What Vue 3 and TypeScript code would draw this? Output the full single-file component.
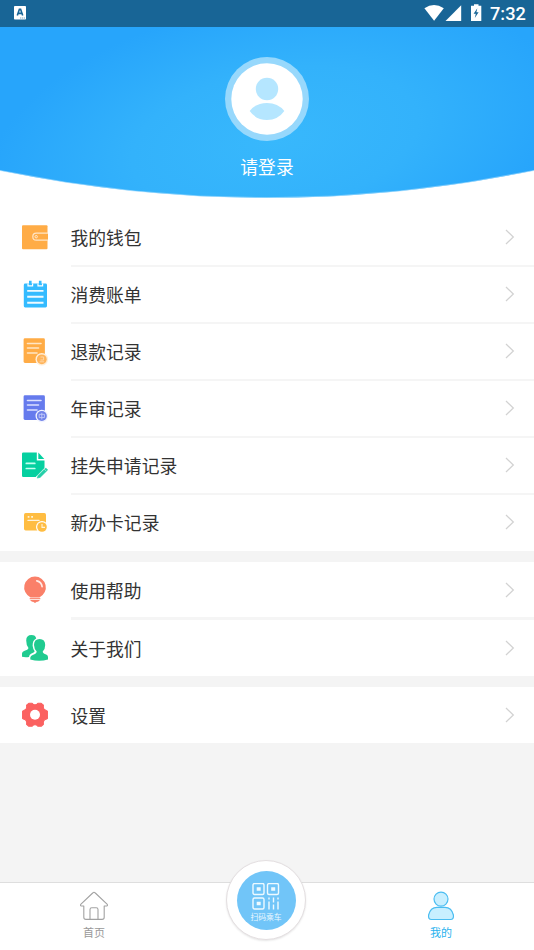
<script setup lang="ts">
interface MenuItem {
  icon: string
  label: string
}

const groups: MenuItem[][] = [
  [
    { icon: 'wallet', label: '我的钱包' },
    { icon: 'bill', label: '消费账单' },
    { icon: 'refund', label: '退款记录' },
    { icon: 'audit', label: '年审记录' },
    { icon: 'loss', label: '挂失申请记录' },
    { icon: 'card', label: '新办卡记录' },
  ],
  [
    { icon: 'help', label: '使用帮助' },
    { icon: 'about', label: '关于我们' },
  ],
  [{ icon: 'settings', label: '设置' }],
]
</script>

<template>
  <div class="screen">
    <header class="hero">
      <svg class="hero-bg" viewBox="0 0 534 198" width="534" height="198">
        <defs>
          <radialGradient id="sky" gradientUnits="userSpaceOnUse" cx="0" cy="0" r="1" gradientTransform="translate(275 140) rotate(-10) scale(290 140)">
            <stop offset="0" stop-color="#38b8fc" />
            <stop offset="0.5" stop-color="#33b2fb" />
            <stop offset="1" stop-color="#27a5fb" />
          </radialGradient>
        </defs>
        <path d="M0 0H534V170.5Q267 225 0 170.5Z" fill="url(#sky)" />
        <path d="M0 170.5Q267 225 534 170.5" fill="none" stroke="#a5dcfd" stroke-width="0.6" />
      </svg>
      <div class="status">
        <svg width="12" height="14" viewBox="0 0 12 14">
          <rect width="12" height="13.5" rx="0.8" fill="#fff" />
          <path d="M3.3 9.5L5.4 3.3H6.6L8.7 9.5M4.2 7.4H7.8" fill="none" stroke="#186596" stroke-width="1.6" />
          <path d="M6 12H11" stroke="#7ea8c2" stroke-width="1" stroke-dasharray="1.3 0.6" />
        </svg>
        <div class="status-right">
          <svg width="58" height="18" viewBox="0 0 58 18" fill="#fff">
            <path d="M0.4 4.2Q10 -2.3 19.8 4.2L10.1 16.8Z" />
            <path d="M37.2 1.2V17H21.5Z" />
            <path fill-rule="evenodd" d="M50 0.2H54.5V1.8H57.3V17H47V1.8H50ZM53.3 4.2L49.6 9.8H51.8L50.8 14L54.6 8.3H52.4Z" />
          </svg>
          <span class="clock">7:32</span>
        </div>
      </div>
      <div class="profile">
        <svg class="avatar" width="84" height="84" viewBox="0 0 84 84">
          <circle cx="42" cy="42" r="42" fill="#97d8fc" />
          <circle cx="42" cy="42" r="35.7" fill="#fff" />
          <circle cx="42" cy="32" r="11.2" fill="#b5e6ff" />
          <path d="M24.7 54Q31 46 42 46T59.3 54Q53 63 42 63T24.7 54Z" fill="#b5e6ff" />
        </svg>
        <span class="login">请登录</span>
      </div>
    </header>

    <main class="menu">
      <section v-for="(group, index) in groups" :key="index" class="group" :class="'group-' + index">
        <div v-for="item in group" :key="item.label" class="row">
          <svg class="icon" width="30" height="30" viewBox="0 0 30 30">
            <g v-if="item.icon === 'wallet'">
              <rect x="2" y="2.2" width="25.5" height="24" rx="1" fill="#ffac46" />
              <path d="M28 10.2H16.3a3.5 3.5 0 0 0 0 7H28" fill="#ffac46" stroke="#ffe5c6" stroke-width="1.2" />
              <circle cx="16.2" cy="13.7" r="1.2" fill="none" stroke="#ffe9cf" />
            </g>
            <g v-else-if="item.icon === 'bill'">
              <rect x="3.8" y="3.5" width="23.2" height="24" rx="1.4" fill="#34bbff" />
              <path d="M8 3.5V5.9H12.6V3.5M18 3.5V5.9H22.6V3.5" fill="none" stroke="#fff" stroke-width="1.2" />
              <path d="M10.3 0.7V5M20.2 0.7V5" stroke="#34bbff" stroke-width="2.6" />
              <path d="M7.2 10.9H23.5M7.2 16.7H23.5M7.2 22.7H23.5" stroke="#eefaff" stroke-width="1.9" />
            </g>
            <g v-else-if="item.icon === 'refund'" transform="translate(0 -1)">
              <rect x="3.6" y="2.3" width="21.3" height="24.6" rx="1.4" fill="#ffac46" />
              <path d="M7.5 7.5H21M7.5 12H18.5M7.5 17H17" stroke="#ffe5c5" stroke-width="1.6" stroke-linecap="round" />
              <circle cx="21.8" cy="23.3" r="6.3" fill="#ffeed9" />
              <circle cx="21.8" cy="23.3" r="4.9" fill="#ffb45a" />
              <path d="M20.5 21H23.6V24H20.5M19.6 25.8H24.2" fill="none" stroke="#ffd5a4" stroke-width="1" />
            </g>
            <g v-else-if="item.icon === 'audit'" transform="translate(0 -1)">
              <rect x="3.6" y="2.3" width="21.3" height="24.6" rx="1.4" fill="#667bed" />
              <path d="M7.5 7.5H21M7.5 12H18.5M7.5 17H17" stroke="#dce1ff" stroke-width="1.6" stroke-linecap="round" />
              <circle cx="21.8" cy="23" r="6.3" fill="#f1f3ff" />
              <circle cx="21.8" cy="23" r="5" fill="#7082e9" />
              <path d="M19.2 21.3H24.4V24.6H19.2ZM21.8 19.8V26.5" fill="none" stroke="#c3caf9" stroke-width="0.9" />
            </g>
            <g v-else-if="item.icon === 'loss'" transform="translate(0 -0.5)">
              <path d="M3.2 2H16.8V10H24.5V19L17.8 26.5H3.2A1.2 1.2 0 0 1 2 25.3V3.2A1.2 1.2 0 0 1 3.2 2Z" fill="#05d0a0" />
              <path d="M18.3 2L24.3 8.5H18.3Z" fill="#05d0a0" />
              <path d="M6.3 12.9H14.8M6.3 18H14.8" stroke="#c5fff0" stroke-width="1.7" stroke-linecap="round" />
              <path d="M17 28.2L28 17" stroke="#fff" stroke-width="4.4" />
              <path d="M17.2 27.6L18.2 24.9L25.7 17.4L27.7 19.4L20.1 26.9Z" fill="#24cfa8" stroke="#24cfa8" stroke-width="0.6" />
              <path d="M24.2 18.6L26.4 20.8" stroke="#b7f7e5" stroke-width="0.7" />
            </g>
            <g v-else-if="item.icon === 'card'">
              <rect x="4" y="5" width="22" height="17.5" rx="1.7" fill="#ffbd42" />
              <path d="M7.7 8.8H9.4M11.2 8.8H13" stroke="#fff3da" stroke-width="1.8" />
              <path d="M8 12.4H19" stroke="#fff3da" stroke-width="1.4" stroke-linecap="round" />
              <circle cx="22" cy="19" r="6" fill="#fff" />
              <circle cx="22" cy="19" r="4.8" fill="#ffbd42" />
              <path d="M22 16V19.4H25" fill="none" stroke="#fff3da" stroke-width="1.1" />
            </g>
            <g v-else-if="item.icon === 'help'">
              <path d="M15 1.5A10.9 10.9 0 0 1 19.7 22.2V22.6H10.3V22.2A10.9 10.9 0 0 1 15 1.5Z" fill="#fa8069" />
              <path d="M16.8 5.8Q21.6 6.9 22.1 11.6" fill="none" stroke="#ffeae6" stroke-width="1.7" stroke-linecap="round" />
              <path d="M10.2 23.7H19.8" stroke="#fa8f7a" stroke-width="1.3" stroke-linecap="round" />
              <path d="M10 25.1H20L18 26.7H16.9L15 28L13.1 26.7H12Z" fill="#fa8069" />
            </g>
            <g v-else-if="item.icon === 'about'" fill="#20cb90">
              <path d="M2 23.8V20.6Q2.1 18.7 4.1 18Q8.2 16.8 8.5 15Q6.2 12.2 6.2 7.5Q6.2 2 11.5 2Q15.6 2 16.2 5.4Q12.3 7.4 12.6 12.8Q13 16.4 14.7 18.2Q14.4 19.6 11 20.7Q9.2 21.6 9 23.9Q5.5 24.5 2 23.8Z" />
              <path d="M14 12Q14 5.9 19.6 5.9T25.2 12Q25.2 16.2 22.7 18.5Q22.8 20.6 26.2 21.5Q28 22.1 28 24V26.5Q19.5 29 10.3 26.6V24.5Q10.6 22.6 12.7 22Q16.7 20.8 16.7 18.5Q14.2 16.2 14 12Z" />
            </g>
            <g v-else>
              <path d="M8.8 3.3H12.1Q13 4.9 15 4.9T17.9 3.3H21.2L23.4 5.2Q22.7 9.7 26 10.4L27.4 11.2V18.4L26 19.2Q22.7 19.9 23.4 24.4L21.2 26.3H17.9Q17 24.7 15 24.7T12.1 26.3H8.8L6.6 24.4Q7.3 19.9 4 19.2L2.6 18.4V11.2L4 10.4Q7.3 9.7 6.6 5.2Z" fill="#fb6160" stroke="#fb6160" stroke-width="1.1" stroke-linejoin="round" />
              <circle cx="15" cy="14.8" r="5" fill="#fff" />
            </g>
          </svg>
          <div class="body">
            <span class="label">{{ item.label }}</span>
            <svg class="chevron" width="10" height="16" viewBox="0 0 10 16">
              <path d="M1 1L8.3 8L1 15" fill="none" stroke="#d2d2d2" stroke-width="1.3" />
            </svg>
          </div>
        </div>
      </section>
    </main>

    <nav class="tabs">
      <div class="tab">
        <svg width="30" height="30" viewBox="0 0 30 30" fill="none" stroke="#a2a2a2" stroke-width="1.1" stroke-linejoin="round">
          <path d="M15 1.3Q15.6 1.3 16.3 2L28.3 13.3Q28.8 15 27.7 15H25.2V26.2Q25.2 28.4 23 28.4H7Q4.8 28.4 4.8 26.2V15H2.3Q1.2 15 1.7 13.3L13.7 2Q14.4 1.3 15 1.3Z" />
          <path d="M11 28.2V18.5Q11 16.7 12.8 16.7H17.2Q19 16.7 19 18.5V28.2" />
        </svg>
        <span>首页</span>
      </div>
      <div class="scan">
        <div class="scan-disc">
          <svg width="28" height="28" viewBox="0 0 28 28" fill="none" stroke="#eefaff" stroke-width="1.4">
            <rect x="1" y="0.5" width="11" height="11" rx="1.5" />
            <rect x="15.5" y="0.5" width="11" height="11" rx="1.5" />
            <rect x="1" y="15" width="11" height="11" rx="1.5" />
            <path d="M4.7 6H8.7M19.2 6H23.2M4.7 20.5H8.7" stroke-width="3.7" />
            <path d="M17 14.5V16.5M17 18.5V26.5M21.5 14.5V19.5M21.5 21.5V26.5M26 14.5V16.5M26 18.5V26.5" />
          </svg>
          <span>扫码乘车</span>
        </div>
      </div>
      <div class="tab active">
        <svg width="30" height="30" viewBox="0 0 30 30" fill="#c8efff" stroke="#4bbdf1" stroke-width="1.2">
          <circle cx="15" cy="8.1" r="7" />
          <path d="M11 16.3H19Q25.6 16.3 27.4 24Q28 28.5 24.5 28.5H5.5Q2 28.5 2.6 24Q4.4 16.3 11 16.3Z" />
        </svg>
        <span>我的</span>
      </div>
    </nav>
  </div>
</template>

<style>
body {
  margin: 0;
}
</style>

<style scoped>
.screen {
  display: flex;
  flex-direction: column;
  width: 534px;
  height: 950px;
  overflow: hidden;
  background: #f4f4f4;
  font-family: "Noto Sans CJK SC", sans-serif;
}
.screen svg {
  display: block;
  flex: none;
}
.hero {
  position: relative;
  flex: none;
  height: 210px;
  background: #fff;
}
.hero-bg {
  position: absolute;
  inset: 0;
}
.status {
  position: relative;
  display: flex;
  align-items: center;
  justify-content: space-between;
  height: 26.7px;
  padding: 0 8px 0 14px;
  background: #186596;
}
.status-right {
  display: flex;
  align-items: center;
  gap: 8px;
  color: #fff;
}
.clock {
  width: 36px;
  padding-top: 1px;
  font: 500 18.2px/26px Roboto, sans-serif;
  white-space: nowrap;
}
.profile {
  position: relative;
  display: flex;
  flex-direction: column;
  align-items: center;
  gap: 12px;
  padding-top: 30px;
}
.login {
  color: #fff;
  font-size: 17.8px;
  line-height: 26px;
}
.group {
  background: #fff;
}
.group + .group {
  margin-top: 11px;
}
.row {
  display: flex;
  gap: 20.5px;
  height: 57px;
  padding-left: 20px;
}
.icon {
  margin-top: 13px;
}
.body {
  display: flex;
  flex: 1;
  box-sizing: border-box;
  align-items: center;
  justify-content: space-between;
  padding-right: 19px;
  border-bottom: 2px solid #f5f5f5;
}
.group-0 .body {
  padding-bottom: 1px;
}
.group-0 .row:last-child {
  height: 56px;
}
.row:last-child .body {
  border-bottom-color: transparent;
}
.group-1 .row {
  height: 58px;
}
.group-1 .body {
  border-bottom-width: 3px;
}
.group-1 .row:last-child,
.group-2 .row {
  height: 56px;
}
.group-1 .row:last-child .body,
.group-2 .body {
  border-bottom: 0;
}
.label {
  color: #333;
  font-size: 17.8px;
  line-height: 26px;
}
.tabs {
  display: flex;
  flex: none;
  box-sizing: border-box;
  justify-content: space-between;
  height: 68px;
  margin-top: auto;
  padding: 0 73px 0 74px;
  border-top: 1px solid #dedede;
  background: #fff;
}
.tab {
  display: flex;
  flex-direction: column;
  align-items: center;
  width: 40px;
  padding-top: 8px;
  color: #999;
  font-size: 11px;
  line-height: 16px;
  gap: 3px;
}
.tab.active {
  color: #29b2ee;
}
.scan {
  display: flex;
  box-sizing: border-box;
  align-items: center;
  justify-content: center;
  width: 80px;
  height: 80px;
  margin: -23px 3px 0 0;
  border: 1px solid #e4dfe1;
  border-radius: 50%;
  background: #fff;
  box-shadow: 0 1px 2px #0000001a;
}
.scan-disc {
  display: flex;
  flex-direction: column;
  align-items: center;
  box-sizing: border-box;
  width: 59px;
  height: 59px;
  padding-top: 12px;
  border-radius: 50%;
  background: #71c5f8;
  color: #eaf8ff;
  font-size: 7.8px;
  line-height: 12px;
}
</style>
